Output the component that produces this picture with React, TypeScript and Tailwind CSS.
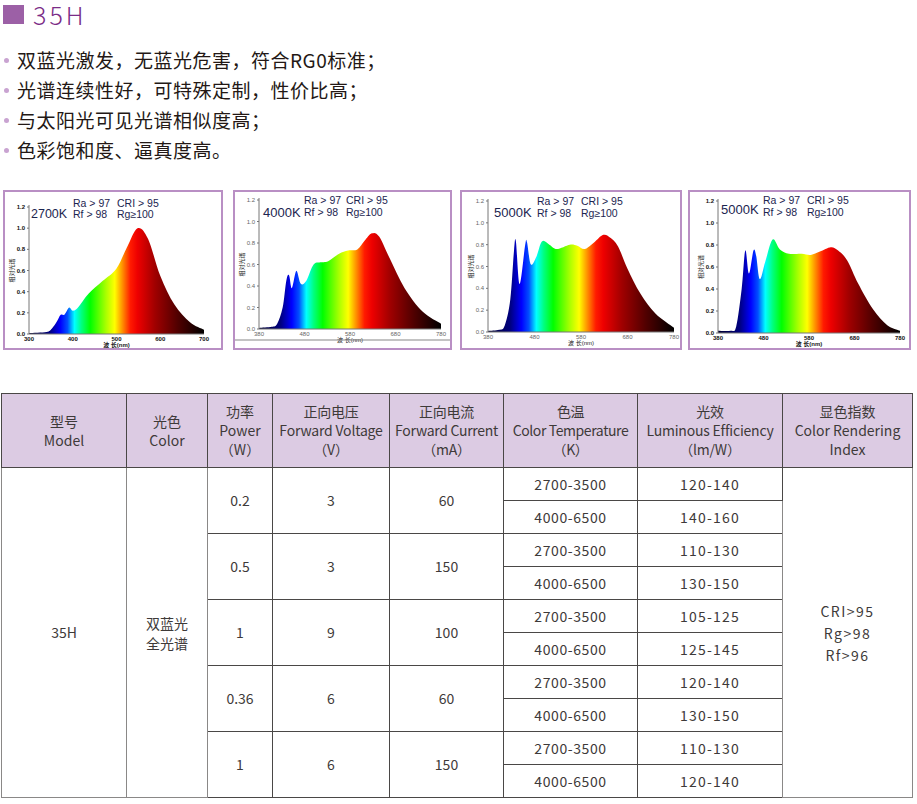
import React from 'react'

type Pt = [number, number]

interface ChartSpec {
  id: string
  ml: string
  w: string
  x0: number
  x1: number
  yTop: number
  yBase: number
  ra: [number, number]
  cri: number
  line2: number
  cct: string
  cctX: number
  cctY: number
  cctSize: number
  ticks: string[]
  bold?: boolean
  rule?: boolean
  pts: Pt[]
}

const SPECTRUM: [number, string][] = [
  [0, '#000030'],
  [0.12, '#000080'],
  [0.18, '#0000ff'],
  [0.22, '#0050ff'],
  [0.26, '#00ffff'],
  [0.3, '#00ff80'],
  [0.35, '#00ff00'],
  [0.44, '#aaff00'],
  [0.49, '#ffff00'],
  [0.53, '#ff9900'],
  [0.58, '#ff1a00'],
  [0.62, '#ee0000'],
  [0.72, '#a00000'],
  [0.85, '#500000'],
  [1, '#000000'],
]

const CHARTS: ChartSpec[] = [
  {
    id: 'c1', ml: 'ml-[3px]', w: 'w-[220px]',
    x0: 24, x1: 199, yTop: 15, yBase: 142,
    ra: [68, 15], cri: 112, line2: 26, cct: '2700K', cctX: 26, cctY: 26, cctSize: 12.5,
    ticks: ['300', '400', '500', '600', '700'], bold: true,
    pts: [[0, 0.01], [0.1, 0.02], [0.13, 0.05], [0.16, 0.12], [0.18, 0.18], [0.2, 0.18], [0.21, 0.2], [0.23, 0.25], [0.25, 0.22], [0.28, 0.25], [0.34, 0.38], [0.42, 0.5], [0.5, 0.62], [0.56, 0.82], [0.62, 1.0], [0.68, 0.9], [0.75, 0.55], [0.83, 0.28], [0.92, 0.11], [1, 0.04]],
  },
  {
    id: 'c2', ml: 'ml-[10px]', w: 'w-[219px]',
    x0: 24, x1: 206, yTop: 8, yBase: 137,
    ra: [69, 12], cri: 111, line2: 24, cct: '4000K', cctX: 28, cctY: 25, cctSize: 13,
    ticks: ['380', '480', '580', '680', '780'], rule: true,
    pts: [[0, 0.01], [0.07, 0.02], [0.1, 0.05], [0.13, 0.2], [0.15, 0.45], [0.165, 0.5], [0.18, 0.38], [0.2, 0.52], [0.21, 0.53], [0.23, 0.42], [0.26, 0.45], [0.3, 0.6], [0.34, 0.62], [0.38, 0.63], [0.44, 0.7], [0.49, 0.73], [0.54, 0.74], [0.58, 0.82], [0.62, 0.89], [0.66, 0.86], [0.72, 0.65], [0.8, 0.38], [0.9, 0.16], [1, 0.05]],
  },
  {
    id: 'c3', ml: 'ml-[8px]', w: 'w-[222px]',
    x0: 26, x1: 212, yTop: 9, yBase: 140,
    ra: [75, 13], cri: 119, line2: 25, cct: '5000K', cctX: 32, cctY: 25, cctSize: 13,
    ticks: ['380', '480', '580', '680', '780'],
    pts: [[0, 0.01], [0.06, 0.02], [0.09, 0.06], [0.12, 0.3], [0.14, 0.75], [0.15, 0.83], [0.17, 0.44], [0.2, 0.8], [0.21, 0.82], [0.23, 0.62], [0.26, 0.69], [0.29, 0.83], [0.33, 0.8], [0.37, 0.76], [0.44, 0.8], [0.48, 0.79], [0.52, 0.76], [0.57, 0.82], [0.62, 0.89], [0.66, 0.86], [0.7, 0.78], [0.75, 0.58], [0.82, 0.35], [0.9, 0.17], [1, 0.04]],
  },
  {
    id: 'c4', ml: 'ml-[6px]', w: 'w-[223px]',
    x0: 28, x1: 210, yTop: 9, yBase: 141,
    ra: [73, 12], cri: 117, line2: 24, cct: '5000K', cctX: 31, cctY: 22, cctSize: 13,
    ticks: ['380', '480', '580', '680', '780'], bold: true,
    pts: [[0, 0.02], [0.07, 0.02], [0.1, 0.06], [0.13, 0.4], [0.15, 0.75], [0.17, 0.54], [0.195, 0.75], [0.21, 0.7], [0.23, 0.49], [0.26, 0.65], [0.3, 0.85], [0.34, 0.76], [0.39, 0.72], [0.46, 0.72], [0.51, 0.71], [0.56, 0.74], [0.62, 0.78], [0.66, 0.75], [0.71, 0.66], [0.77, 0.45], [0.85, 0.22], [0.93, 0.07], [1, 0.02]],
  },
]

function smoothPath(pts: Pt[]): string {
  let d = `M${pts[0][0]},${pts[0][1]}`
  for (let i = 0; i < pts.length - 1; i++) {
    const p0 = pts[i - 1] || pts[i]
    const p1 = pts[i]
    const p2 = pts[i + 1]
    const p3 = pts[i + 2] || p2
    const c1x = p1[0] + (p2[0] - p0[0]) / 6
    const c1y = p1[1] + (p2[1] - p0[1]) / 6
    const c2x = p2[0] - (p3[0] - p1[0]) / 6
    const c2y = p2[1] - (p3[1] - p1[1]) / 6
    d += ` C${c1x.toFixed(2)},${c1y.toFixed(2)} ${c2x.toFixed(2)},${c2y.toFixed(2)} ${p2[0].toFixed(2)},${p2[1].toFixed(2)}`
  }
  return d
}

function Chart({ c }: { c: ChartSpec }) {
  const pw = c.x1 - c.x0
  const ph = c.yBase - c.yTop
  const mapped: Pt[] = c.pts.map(([f, v]) => [c.x0 + f * pw, c.yBase - (v / 1.2) * ph])
  const area = `${smoothPath(mapped)} L${c.x1},${c.yBase} L${c.x0},${c.yBase} Z`
  const tickCol = c.bold ? '#111' : '#666'
  const ys = [0, 0.2, 0.4, 0.6, 0.8, 1.0, 1.2]

  return (
    <div className={`${c.ml} ${c.w} h-[160px] border-2 border-[#b98fc4] bg-white flex-none overflow-hidden`}>
      <svg width="100%" height="156" className="block" style={{ fontFamily: '"Liberation Sans", "Noto Sans CJK SC", sans-serif' }}>
        <defs>
          <linearGradient id={`g-${c.id}`} gradientUnits="userSpaceOnUse" x1={c.x0} x2={c.x1} y1="0" y2="0">
            {SPECTRUM.map(([o, col]) => (
              <stop key={o} offset={o} stopColor={col} />
            ))}
          </linearGradient>
        </defs>

        <path d={area} fill={`url(#g-${c.id})`} />

        {/* axes */}
        <line x1={c.x0} y1={c.yTop - 2} x2={c.x0} y2={c.yBase} stroke="#777" strokeWidth="1" />
        <line x1={c.x0} y1={c.yBase} x2={c.x1} y2={c.yBase} stroke="#777" strokeWidth="1" />
        {ys.map(v => {
          const y = c.yBase - (v / 1.2) * ph
          return (
            <g key={v}>
              <line x1={c.x0 - 2} y1={y} x2={c.x0} y2={y} stroke="#777" />
              <text x={c.x0 - 4} y={y + 2} fontSize="6" textAnchor="end" fill={tickCol} fontWeight={c.bold ? 700 : 400}>
                {v.toFixed(1)}
              </text>
            </g>
          )
        })}
        {c.ticks.map((t, i) => {
          const x = c.x0 + (i / 4) * pw
          return (
            <text key={t} x={x} y={c.yBase + 7} fontSize="6" textAnchor="middle" fill={tickCol} fontWeight={c.bold ? 700 : 400}>
              {t}
            </text>
          )
        })}
        <text x={c.x0 + pw / 2} y={c.yBase + 13} fontSize="6" textAnchor="middle" fill="#222" fontWeight={c.bold ? 700 : 400}>
          波 长(nm)
        </text>
        <text
          x={c.x0 - 15}
          y={c.yTop + ph / 2}
          fontSize="6"
          textAnchor="middle"
          fill="#222"
          transform={`rotate(-90 ${c.x0 - 15} ${c.yTop + ph / 2})`}
        >
          相对光谱
        </text>

        {/* legend */}
        <text x={c.ra[0]} y={c.ra[1]} fontSize="10.5" fill="#1c2550">Ra &gt; 97</text>
        <text x={c.cri} y={c.ra[1]} fontSize="10.5" fill="#1c2550">CRI &gt; 95</text>
        <text x={c.ra[0]} y={c.line2} fontSize="10.5" fill="#1c2550">Rf &gt; 98</text>
        <text x={c.cri} y={c.line2} fontSize="10.5" fill="#1c2550">Rg≥100</text>
        <text x={c.cctX} y={c.cctY} fontSize={c.cctSize} fill="#1c2550">{c.cct}</text>

        {c.rule && <line x1="0" y1="148" x2="220" y2="148" stroke="#888" strokeWidth="1.2" />}
      </svg>
    </div>
  )
}

const GROUPS = [
  { p: '0.2', v: '3', i: '60', eff: ['120-140', '140-160'] },
  { p: '0.5', v: '3', i: '150', eff: ['110-130', '130-150'] },
  { p: '1', v: '9', i: '100', eff: ['105-125', '125-145'] },
  { p: '0.36', v: '6', i: '60', eff: ['120-140', '130-150'] },
  { p: '1', v: '6', i: '150', eff: ['110-130', '120-140'] },
]
const CT = ['2700-3500', '4000-6500']

const BULLETS = [
  '双蓝光激发，无蓝光危害，符合RG0标准；',
  '光谱连续性好，可特殊定制，性价比高；',
  '与太阳光可见光谱相似度高；',
  '色彩饱和度、逼真度高。',
]

const cell = 'border border-[#4a4746] text-center align-middle p-0'
const grey = 'border border-[#8a8887] text-center align-middle p-0'

export default function App() {
  return (
    <div
      className="w-[917px] h-[804px] bg-white overflow-hidden text-[#231815]"
      style={{ fontFamily: '"Noto Sans CJK SC", "Noto Sans", sans-serif' }}
    >
      {/* Title */}
      <div className="flex items-center h-[28px] pl-[3px]">
        <span className="w-[21px] h-[19px] bg-[#9c60a6]" />
        <span className="ml-[9px] text-[25px] leading-[28px] font-light tracking-[3px] text-[#7b2c87]">35H</span>
      </div>

      {/* Feature bullets */}
      <ul className="mt-[17px] flex flex-col">
        {BULLETS.map(b => (
          <li key={b} className="flex items-center h-[30px]">
            <span className="ml-[4px] w-[5px] h-[5px] rounded-full bg-[#c9a3d1]" />
            <span className="ml-[8px] text-[19px] leading-[30px] tracking-[0.5px]">{b}</span>
          </li>
        ))}
      </ul>

      {/* Spectrum charts */}
      <div className="mt-[25px] flex">
        {CHARTS.map(c => (
          <Chart key={c.id} c={c} />
        ))}
      </div>

      {/* Spec table */}
      <table className="mt-[43px] ml-[1px] w-[911px] table-fixed border-collapse text-[14px] text-[#3e3a39]">
        <colgroup>
          <col className="w-[125px]" />
          <col className="w-[81px]" />
          <col className="w-[65px]" />
          <col className="w-[117px]" />
          <col className="w-[114px]" />
          <col className="w-[134px]" />
          <col className="w-[145px]" />
          <col className="w-[130px]" />
        </colgroup>
        <thead>
          <tr className="h-[74px] bg-[#dccbe3] leading-[19px]">
            <th className={`${cell} font-normal`}>型号<br />Model</th>
            <th className={`${cell} font-normal`}>光色<br />Color</th>
            <th className={`${cell} font-normal`}>功率<br />Power<br />（W）</th>
            <th className={`${cell} font-normal tracking-[-0.2px]`}>正向电压<br />Forward Voltage<br />（V）</th>
            <th className={`${cell} font-normal tracking-[-0.3px]`}>正向电流<br />Forward Current<br />（mA）</th>
            <th className={`${cell} font-normal tracking-[-0.4px]`}>色温<br />Color Temperature<br />（K）</th>
            <th className={`${cell} font-normal tracking-[-0.2px]`}>光效<br />Luminous Efficiency<br />（lm/W）</th>
            <th className={`${cell} font-normal`}>显色指数<br />Color Rendering<br />Index</th>
          </tr>
        </thead>
        <tbody>
          {GROUPS.map((g, gi) =>
            [0, 1].map(k => (
              <tr key={`${gi}-${k}`} className="h-[33px]">
                {gi === 0 && k === 0 && (
                  <>
                    <td rowSpan={10} className={grey}>35H</td>
                    <td rowSpan={10} className={`${grey} leading-[20px]`}>双蓝光<br />全光谱</td>
                  </>
                )}
                {k === 0 && (
                  <>
                    <td rowSpan={2} className={cell}>{g.p}</td>
                    <td rowSpan={2} className={cell}>{g.v}</td>
                    <td rowSpan={2} className={cell}>{g.i}</td>
                  </>
                )}
                <td className={`${cell} tracking-[0.6px]`}>{CT[k]}</td>
                <td className={`${cell} tracking-[1.2px]`}>{g.eff[k]}</td>
                {gi === 0 && k === 0 && (
                  <td rowSpan={10} className={`${grey} leading-[22px] tracking-[1.5px]`}>
                    CRI&gt;95<br />Rg&gt;98<br />Rf&gt;96
                  </td>
                )}
              </tr>
            ))
          )}
        </tbody>
      </table>
    </div>
  )
}
